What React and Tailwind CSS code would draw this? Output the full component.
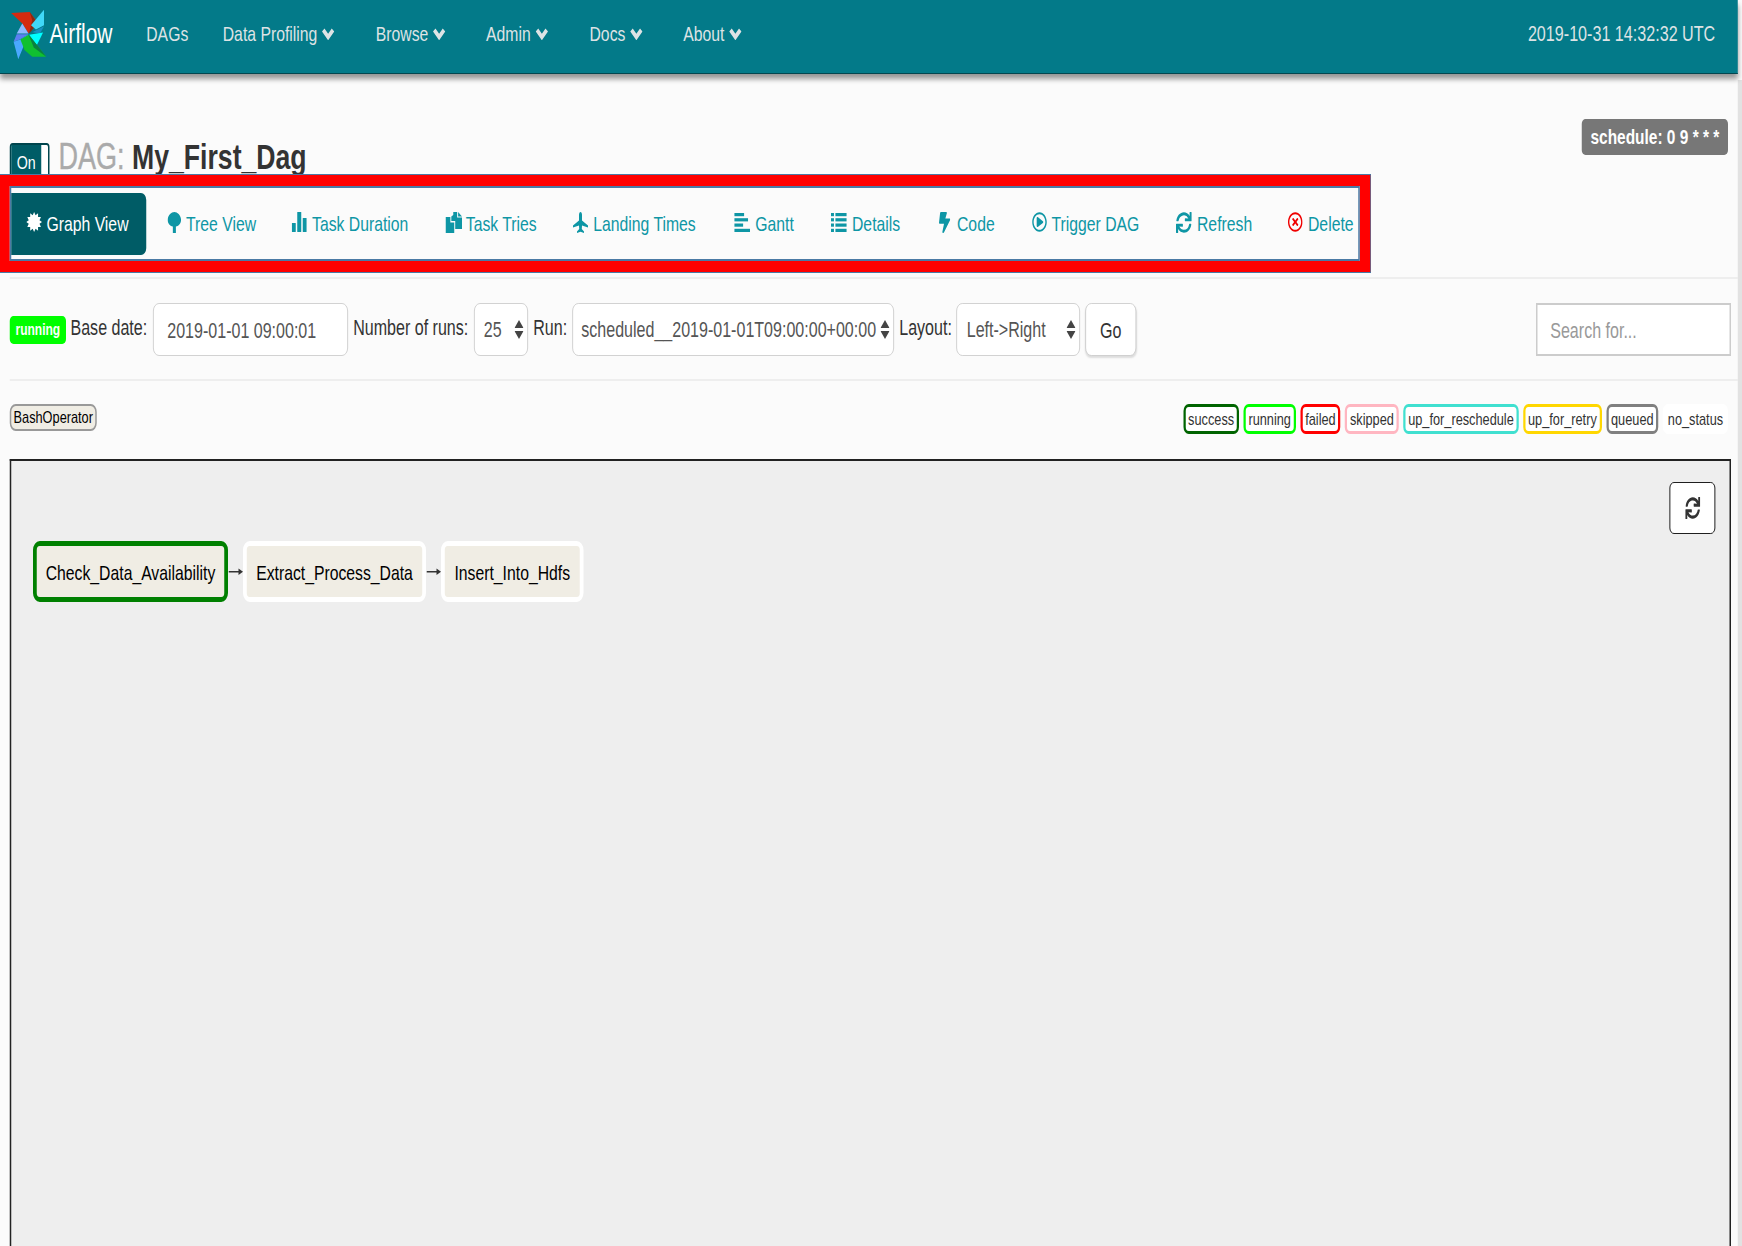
import { FaBolt, FaRegPlayCircle, FaSync, FaRegTimesCircle } from 'react-icons/fa';

const stretch = { preserveAspectRatio: 'none' };

function Caret() {
  return (
    <svg viewBox="0 0 17 12" className="w-[17px] h-[12px] shrink-0" {...stretch} fill="none" stroke="currentColor" strokeWidth="4.500">
      <polyline points="2,2 8.500,9 15,2" />
    </svg>
  );
}

// 12 point burst, like the certificate glyph
const burst = Array.from({ length: 24 }, (_, i) => {
  const r = i % 2 ? 8.5 : 12;
  const a = (i * Math.PI) / 12;
  return `${12 + r * Math.sin(a)},${12 - r * Math.cos(a)}`;
}).join(' ');

function BurstIcon({ className }) {
  return (
    <svg viewBox="0 0 24 24" className={className} {...stretch} fill="currentColor">
      <polygon points={burst} />
    </svg>
  );
}

function TreeIcon({ className }) {
  return (
    <svg viewBox="0 0 14 21" className={className} {...stretch} fill="currentColor">
      <path d="M7 0C10 0 13 3 13.500 7C14 11 11.500 14 8.500 14.500L8.500 21H5.500L5.500 14.500C2.500 14 0 11 .5 7C1 3 4 0 7 0Z" />
    </svg>
  );
}

function BarsIcon({ className }) {
  return (
    <svg viewBox="0 0 15 20" className={className} {...stretch} fill="currentColor">
      <rect x="0" y="11" width="4" height="9" rx=".5" />
      <rect x="5.500" y="0" width="4" height="20" rx=".5" />
      <rect x="11" y="6" width="4" height="14" rx=".5" />
    </svg>
  );
}

function TriesIcon({ className }) {
  return (
    <svg viewBox="0 0 17 21" className={className} {...stretch} fill="currentColor">
      <path d="M0 5H5V10.500H9V21H0Z" />
      <path d="M6 4.500V9H10V17H17V5.500H12V0H8V3Z" />
      <path d="M13 0L17 4.500H13Z" />
    </svg>
  );
}

function PlaneIcon({ className }) {
  return (
    <svg viewBox="0 0 15 21" className={className} {...stretch} fill="currentColor">
      <path d="M7.500 0C8.500 0 9 1.500 9 3V8.500L15 13.500V15.500L9 13.500L8.800 17L11 19.500V21L7.500 19.800L4 21V19.500L6.200 17L6 13.500L0 15.500V13.500L6 8.500V3C6 1.500 6.500 0 7.500 0Z" />
    </svg>
  );
}

function GanttIcon({ className }) {
  return (
    <svg viewBox="0 0 16 19" className={className} {...stretch} fill="currentColor">
      <rect x="0" y="0" width="10" height="3.200" />
      <rect x="0" y="5.200" width="14" height="3.200" />
      <rect x="0" y="10.500" width="9" height="3.200" />
      <rect x="0" y="15.800" width="16" height="3.200" />
    </svg>
  );
}

function ListIcon({ className }) {
  return (
    <svg viewBox="0 0 16 19" className={className} {...stretch} fill="currentColor">
      {[0, 5.2, 10.5, 15.8].map((y) => (
        <g key={y}>
          <rect x="0" y={y} width="3" height="3.200" />
          <rect x="4.500" y={y} width="11.500" height="3.200" />
        </g>
      ))}
    </svg>
  );
}

function PinwheelLogo() {
  return (
    <svg viewBox="30 26 116 154" className="w-[48px] h-[51px] shrink-0" {...stretch}>
      <polygon points="32,38 92,35 112,60 88,100 68,70" fill="#d42a10" />
      <polygon points="92,35 118,70 90,100 100,60" fill="#8a2a10" />
      <polygon points="50,100 68,70 88,100" fill="#8fb8ff" />
      <polygon points="40,125 50,102 88,102 60,118" fill="#5c7ff0" />
      <polygon points="55,178 40,125 62,118 88,102" fill="#4aa8ff" />
      <polygon points="138,28 96,75 112,88 138,75" fill="#40d8f8" />
      <polygon points="100,96 138,78 125,100" fill="#1a90c0" />
      <polygon points="90,104 135,97 115,135" fill="#00ffff" />
      <polygon points="62,118 88,104 115,135 145,170 100,170 75,150" fill="#10c030" />
      <polygon points="88,104 118,138 145,170 105,142" fill="#0a8040" />
    </svg>
  );
}

function SelectArrows() {
  return (
    <svg viewBox="0 0 12 19" className="w-[12px] h-[19px]" {...stretch} fill="#444">
      <polygon points="6,0 12,8 0,8" />
      <polygon points="6,19 12,11 0,11" />
    </svg>
  );
}

function EdgeArrow() {
  return (
    <svg viewBox="0 0 20 12" className="w-[20px] h-[12px]" {...stretch} fill="#333">
      <rect x="1" y="5" width="15" height="1.500" />
      <polygon points="14,2.500 20,5.800 14,9" />
    </svg>
  );
}

const navItems = [
  { label: 'DAGs', width: 'w-[102px]' },
  { label: 'Data Profiling', width: 'w-[204px]', caret: true },
  { label: 'Browse', width: 'w-[147px]', caret: true },
  { label: 'Admin', width: 'w-[138px]', caret: true },
  { label: 'Docs', width: 'w-[125px]', caret: true },
  { label: 'About', width: 'w-[120px]', caret: true },
];

const tabs = [
  { label: 'Tree View', Icon: TreeIcon, cell: 'w-[166px] ml-[28px]', slot: 'w-[25px]', icon: 'w-[19px] h-[21px]' },
  { label: 'Task Duration', Icon: BarsIcon, cell: 'w-[205px]', slot: 'w-[27px]', icon: 'w-[20px] h-[20px]' },
  { label: 'Task Tries', Icon: TriesIcon, cell: 'w-[170px]', slot: 'w-[27px]', icon: 'w-[22px] h-[21px]' },
  { label: 'Landing Times', Icon: PlaneIcon, cell: 'w-[215px]', slot: 'w-[27px]', icon: 'w-[20px] h-[21px]' },
  { label: 'Gantt', Icon: GanttIcon, cell: 'w-[129px]', slot: 'w-[28px]', icon: 'w-[21px] h-[19px]' },
  { label: 'Details', Icon: ListIcon, cell: 'w-[144px]', slot: 'w-[28px]', icon: 'w-[21px] h-[19px]' },
  { label: 'Code', Icon: FaBolt, cell: 'w-[124px]', slot: 'w-[24px]', icon: 'w-[15px] h-[21px]' },
  { label: 'Trigger DAG', Icon: FaRegPlayCircle, cell: 'w-[192px]', slot: 'w-[26px]', icon: 'w-[20px] h-[20px]' },
  { label: 'Refresh', Icon: FaSync, cell: 'w-[149px]', slot: 'w-[28px]', icon: 'w-[21px] h-[21px]' },
  { label: 'Delete', Icon: FaRegTimesCircle, cell: 'w-[80px]', slot: 'w-[27px]', icon: 'w-[20px] h-[20px] text-[#f00000]' },
];

const states = [
  { label: 'success', color: 'border-[#006400]' },
  { label: 'running', color: 'border-[#00ff00]' },
  { label: 'failed', color: 'border-[#ff0000]' },
  { label: 'skipped', color: 'border-[#ffb6c1]' },
  { label: 'up_for_reschedule', color: 'border-[#40e0d0]' },
  { label: 'up_for_retry', color: 'border-[#ffd700]' },
  { label: 'queued', color: 'border-[#808080]' },
  { label: 'no_status', color: 'border-white' },
];

const nodes = [
  { label: 'Check_Data_Availability', className: 'w-[260px] border-[#008000]' },
  { label: 'Extract_Process_Data', className: 'w-[244px] border-white' },
  { label: 'Insert_Into_Hdfs', className: 'w-[190px] border-white' },
];

const control = 'h-[53px] bg-white border border-[#ccc] rounded-[8px] text-[#555] flex items-center shrink-0';

// the reference is squeezed horizontally, so the page is laid out wider and scaled back on x
export default function App() {
  return (
    <div className="w-[1742px] h-[1246px] overflow-hidden">
      <div className="w-[2323px] h-[1246px] origin-top-left scale-x-[0.75] flex bg-[#fbfbfb] text-[21px] text-[#333] font-['Liberation_Sans',Arial,sans-serif]">
        <div className="w-[2317px] shrink-0 flex flex-col">
          {/* Navbar */}
          <nav className="h-[74px] shrink-0 pb-[5px] flex items-center bg-[#037a89] border-b border-[#03464f] text-[#dde3e5] shadow-[0_5px_6px_rgba(0,0,0,0.4)] pr-[30px] relative z-10">
            <div className="w-[195px] pl-[14px] flex items-center shrink-0">
              <PinwheelLogo />
              <span className="ml-[4px] text-[28px] leading-none text-white">Airflow</span>
            </div>
            {navItems.map((item) => (
              <a key={item.label} className={`${item.width} flex items-center gap-[6px] shrink-0`}>
                {item.label}
                {item.caret && <Caret />}
              </a>
            ))}
            <span className="ml-auto text-[21.500px]">2019-10-31 14:32:32 UTC</span>
          </nav>

          {/* DAG title, its lower edge slides under the tab bar */}
          <div className="h-[100px] shrink-0 flex justify-between pl-[13px] pr-[13px]">
            <div className="pt-[65px] flex items-start">
              <div className="mt-[4px] w-[53px] h-[38px] flex border-2 border-[#00454d] rounded-t-[4px] bg-white">
                <span className="w-[40px] h-full bg-[#005c66] text-white text-[19px] pt-[4px] text-center">On</span>
              </div>
              <h1 className="ml-[12px] text-[36px] leading-[36px] text-[#333]">
                <span className="text-[#aaa] [-webkit-text-stroke:0.4px]">DAG:</span> <span className="font-bold text-[35.500px]">My_First_Dag</span>
              </h1>
            </div>
            <div className="mt-[45px] h-[36px] w-[195px] bg-[#777] rounded-[5px] text-white text-[20.600px] font-bold flex items-center justify-center">
              schedule: 0 9 * * *
            </div>
          </div>

          {/* Highlighted tab bar */}
          <div className="relative z-[1] w-[1828px] h-[99px] shrink-0 bg-[#ff0000] border-y border-r border-[#4a7aa5] pl-[13px] pr-[14px] pt-[11px] pb-[11px]">
            <div className="h-full border-2 border-[#4a7aa5] bg-[#fbfbfb] flex items-center text-[#0e96a5]">
              <a className="w-[180px] h-[62px] shrink-0 bg-[#005c66] rounded-r-[7px] text-white flex items-center pl-[20px]">
                <span className="w-[27px] shrink-0">
                  <BurstIcon className="w-[21px] h-[20px] -mt-[3px]" />
                </span>
                Graph View
              </a>
              {tabs.map(({ label, Icon, cell, slot, icon }) => (
                <a key={label} className={`${cell} shrink-0 flex items-center whitespace-nowrap`}>
                  <span className={`${slot} shrink-0`}>
                    <Icon className={`${icon} -mt-[3px]`} {...stretch} />
                  </span>
                  {label}
                </a>
              ))}
            </div>
          </div>

          <div className="h-[2px] mt-[4px] ml-[13px] shrink-0 bg-[#eee]" />

          {/* Run controls */}
          <div className="mt-[24px] h-[53px] shrink-0 flex items-center pl-[13px] pr-[9px] text-[21.400px]">
            <span className="w-[75px] h-[28px] shrink-0 bg-[#00ff00] rounded-[5px] text-white text-[16px] font-bold flex items-center justify-center">running</span>
            <label className="ml-[6px] w-[110px] mb-[3px] shrink-0">Base date:</label>
            <div className={`${control} w-[260px] pl-[18px] pt-[3px]`}>2019-01-01 09:00:01</div>
            <label className="ml-[7px] w-[161px] mb-[3px] shrink-0">Number of runs:</label>
            <div className={`${control} w-[72px] pl-[12px] pr-[5px] justify-between`}>
              <span className="mt-[1px]">25</span>
              <SelectArrows />
            </div>
            <label className="ml-[7px] w-[52px] mb-[3px] shrink-0">Run:</label>
            <div className={`${control} w-[429px] pl-[11px] pr-[5px] justify-between`}>
              <span className="mt-[1px] whitespace-nowrap">scheduled__2019-01-01T09:00:00+00:00</span>
              <SelectArrows />
            </div>
            <label className="ml-[7px] w-[76px] mb-[3px] shrink-0">Layout:</label>
            <div className={`${control} w-[165px] pl-[13px] pr-[5px] justify-between`}>
              <span className="mt-[1px]">Left-&gt;Right</span>
              <SelectArrows />
            </div>
            <button className="ml-[7px] w-[68px] h-[53px] pt-[3px] shrink-0 bg-white border border-[#ccc] rounded-[8px] text-[#333] shadow-[0_2px_2px_rgba(0,0,0,0.12)]">Go</button>
            <div className="ml-auto w-[260px] h-[53px] pt-[3px] shrink-0 bg-white border-2 border-[#ccc] pl-[17px] text-[#999] flex items-center">Search for...</div>
          </div>

          <div className="h-[2px] mt-[23px] ml-[13px] shrink-0 bg-[#eee]" />

          {/* Legend */}
          <div className="mt-[23px] h-[30px] shrink-0 flex items-start justify-between pl-[13px] pr-[13px] text-[17px]">
            <span className="w-[116px] h-[27px] bg-[#f0ede4] border-2 border-[#999] rounded-[8px] text-black flex items-center justify-center">BashOperator</span>
            <div className="flex gap-[6px]">
              {states.map((s) => (
                <span key={s.label} className={`h-[30px] pt-[2px] px-[3.500px] border-[3px] rounded-[7px] bg-white flex items-center ${s.color}`}>{s.label}</span>
              ))}
            </div>
          </div>

          {/* Graph canvas */}
          <div className="relative mt-[25px] ml-[13px] mr-[9px] flex-1 bg-[#eee] border-2 border-b-0 border-[#222]">
            <button className="absolute top-[21px] right-[19px] w-[61px] h-[52px] bg-white border border-black rounded-[6px] flex items-center justify-center text-[#333]">
              <FaSync className="w-[20px] h-[22px]" {...stretch} />
            </button>
            <div className="mt-[80px] ml-[29px] flex items-center">
              {nodes.map((node, i) => (
                <div key={node.label} className="flex items-center">
                  {i > 0 && <EdgeArrow />}
                  <div className={`h-[61px] pt-[2px] bg-[#f0ede4] border-[5px] rounded-[9px] text-black flex items-center justify-center ${node.className}`}>{node.label}</div>
                </div>
              ))}
            </div>
          </div>
        </div>
        <div className="flex-1 mt-[80px] bg-[#e2e2e2]" />
      </div>
    </div>
  );
}
